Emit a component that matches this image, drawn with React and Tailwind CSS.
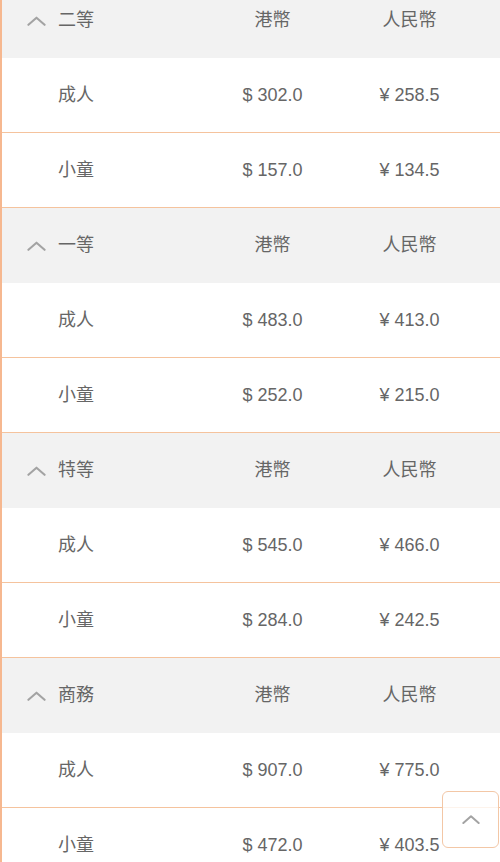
import React from 'react'

const sections = [
  { name: '二等', rows: [['成人', '302.0', '258.5'], ['小童', '157.0', '134.5']] },
  { name: '一等', rows: [['成人', '483.0', '413.0'], ['小童', '252.0', '215.0']] },
  { name: '特等', rows: [['成人', '545.0', '466.0'], ['小童', '284.0', '242.5']] },
  { name: '商務', rows: [['成人', '907.0', '775.0'], ['小童', '472.0', '403.5']] },
]

function Chevron({ className }) {
  return (
    <svg className={className} viewBox="0 0 20 10" fill="none" stroke="currentColor" strokeWidth="2.2" strokeLinecap="round" strokeLinejoin="round">
      <path d="M1.5 9 L10 1.5 L18.5 9" />
    </svg>
  )
}

function Section({ section }) {
  return (
    <div>
      {/* class header */}
      <div className="flex items-center h-[75px] bg-[#f2f2f2] text-[#666]">
        <div className="flex-1 flex items-center">
          <Chevron className="w-[19px] h-[10px] ml-[25px] mr-[12px] text-[#a3a3a3]" />
          <span>{section.name}</span>
        </div>
        <div className="w-[137px] text-center">港幣</div>
        <div className="w-[137px] text-center">人民幣</div>
        <div className="w-[22px]" />
      </div>
      {section.rows.map(([who, hkd, rmb]) => (
        <div key={who} className="flex items-center h-[75px] border-b border-[#f5c39d] text-[#666]">
          <div className="flex-1 pl-[56px]">{who}</div>
          <div className="w-[137px] text-center">$ {hkd}</div>
          <div className="w-[137px] text-center">¥ {rmb}</div>
          <div className="w-[22px]" />
        </div>
      ))}
    </div>
  )
}

export default function App() {
  return (
    <div
      className="relative w-[500px] h-[862px] overflow-hidden bg-white border-l-2 border-[#f6b890] text-[18px]"
      style={{ fontFamily: '"Liberation Sans", "Noto Sans CJK TC", sans-serif' }}
    >
      <div className="-mt-[17px]">
        {sections.map((s) => (
          <Section key={s.name} section={s} />
        ))}
      </div>

      {/* back to top */}
      <button className="absolute right-[1px] bottom-[14px] w-[57px] h-[57px] rounded-md border border-[#f3c7a6] bg-white/80 flex items-center justify-center">
        <Chevron className="w-[18px] h-[9px] text-[#a3a3a3]" />
      </button>
    </div>
  )
}
